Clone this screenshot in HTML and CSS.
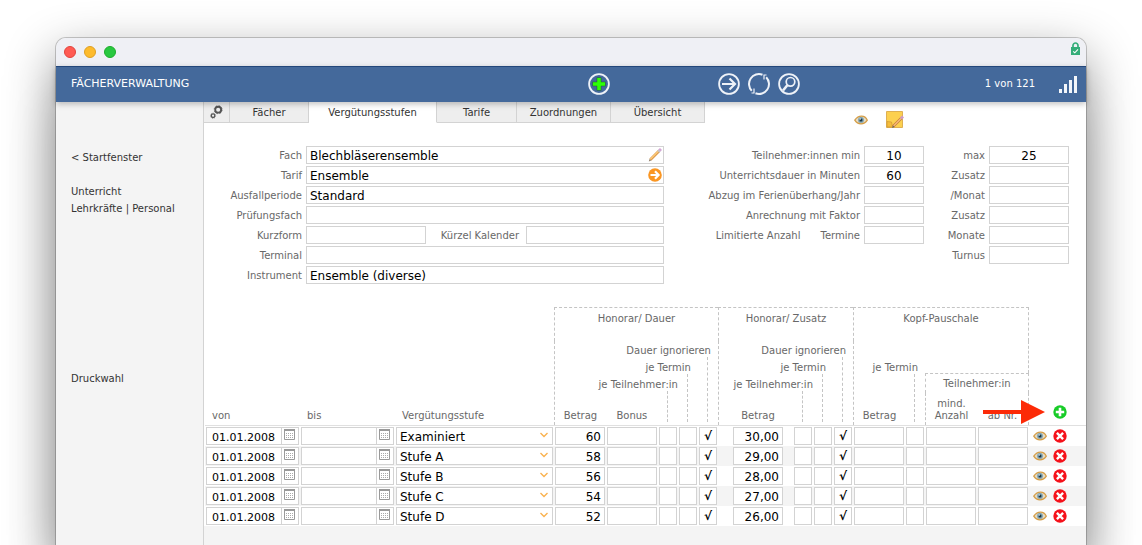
FILE: index.html
```html
<!DOCTYPE html>
<html lang="de">
<head>
  <meta charset="UTF-8" />
  <title>Fächerverwaltung</title>
  <link rel="stylesheet" href="styles.css">
</head>
<body>
  <svg class="sprite" aria-hidden="true">
    <symbol id="i-eye" viewBox="0 0 14 10">
      <path d="M.8 5.200Q3.500 1.200 7.500 1.200T13.300 5.200Q11 8.800 7 8.800T.8 5.200Z" fill="#e6dcc4" stroke="#d49d47" stroke-width="1.300"/>
      <circle cx="7" cy="4.900" r="2.900" fill="#7ba0ae"/>
      <circle cx="7" cy="4.900" r="1.500" fill="#1d3644"/>
      <circle cx="6.200" cy="4" r=".7" fill="#fff"/>
    </symbol>
    <symbol id="i-delete" viewBox="0 0 14 14">
      <circle cx="7" cy="7" r="6.700" fill="#f5121b"/>
      <path d="M3.900 3.900 10.100 10.100M10.100 3.900 3.900 10.100" stroke="#fff" stroke-width="2.400"/>
    </symbol>
    <symbol id="i-calendar" viewBox="0 0 11 11">
      <path d="M.5.5h10v10H.5z" fill="#fff" stroke="#999"/>
      <path d="M0 0h11v2H0z" fill="#999"/>
      <path d="M2 4.500h7M2 6.500h7M2 8.500h7" stroke="#aaa" stroke-dasharray="1 1"/>
    </symbol>
  </svg>

  <div class="window">
    <div class="titlebar">
      <button class="dot red" aria-label="Schließen"></button>
      <button class="dot yellow" aria-label="Minimieren"></button>
      <button class="dot green" aria-label="Maximieren"></button>
      <svg class="lock" width="9" height="13" viewBox="0 0 9 13">
        <path d="M2 6V3.500a2.500 2.500 0 0 1 5 0V6" fill="none" stroke="#34ad79" stroke-width="1.700"/>
        <path d="M0 5h9v8H0z" fill="#34ad79"/>
        <path d="M2.200 9.300 3.800 10.800 7 7.300" fill="none" stroke="#fff" stroke-width="1.100"/>
      </svg>
    </div>

    <header class="header">
      <h1>FÄCHERVERWALTUNG</h1>
      <div class="header-tools">
        <button class="tool tool-new" aria-label="Neu">
          <svg viewBox="0 0 22 22"><circle cx="11" cy="11" r="9.900" fill="none" stroke="#eef2f8" stroke-width="1.800"/><path d="M11 4.500v13M4.500 11h13" stroke="#1c6a1c" stroke-width="4.600"/><path d="M11 5v12M5 11h12" stroke="#2cff08" stroke-width="3.600"/></svg>
        </button>
        <button class="tool" aria-label="Weiter">
          <svg viewBox="0 0 22 22"><circle cx="11" cy="11" r="9.900" fill="none" stroke="#eef2f8" stroke-width="1.800"/><path d="M4 11h13M11.500 5.500 17 11 11.500 16.500" fill="none" stroke="#eef2f8" stroke-width="2.200"/></svg>
        </button>
        <button class="tool" aria-label="Aktualisieren">
          <svg viewBox="0 0 22 22"><path d="M14.500 1.700A9.900 9.900 0 0 0 3.800 17.800M7.500 20.300A9.900 9.900 0 0 0 18.200 4.200" fill="none" stroke="#eef2f8" stroke-width="2"/><path d="M6 15.500v4.500H3.500M16 6.500V2h2.500" fill="none" stroke="#eef2f8" stroke-width="1.200"/></svg>
        </button>
        <button class="tool" aria-label="Suchen">
          <svg viewBox="0 0 22 22"><circle cx="11" cy="11" r="9.900" fill="none" stroke="#eef2f8" stroke-width="1.800"/><circle cx="12.500" cy="8.800" r="4.300" fill="none" stroke="#eef2f8" stroke-width="1.700"/><path d="M9.500 12 5 17.500" stroke="#eef2f8" stroke-width="2.600"/></svg>
        </button>
      </div>
      <span class="count">1 von 121</span>
      <svg class="bars" width="19" height="18" viewBox="0 0 19 18"><path d="M0 14h3v4H0zM5 9h3v9H5zM10 5h3v13h-3zM15 1h3v17h-3z" fill="#f3f6fa"/></svg>
    </header>

    <div class="layout">
      <nav class="sidebar">
        <a href="#">&lt; Startfenster</a>
        <div class="nav-group">
          <a href="#">Unterricht</a>
          <div><a href="#">Lehrkräfte</a> | <a href="#">Personal</a></div>
        </div>
        <a class="nav-print" href="#">Druckwahl</a>
      </nav>

      <main class="main">
        <div class="content">
          <div class="toolbar">
            <div class="tabs">
              <button class="tab" aria-label="Einstellungen">
                <svg width="13" height="14" viewBox="0 0 14 15" fill="none" stroke="#555"><circle cx="8.800" cy="5" r="3.200" stroke-width="2"/><circle cx="8.800" cy="5" r="4.300" stroke-width=".8" stroke-dasharray="1.700 1.680"/><circle cx="3.300" cy="11.500" r="1.900" stroke-width="1.400"/><circle cx="3.300" cy="11.500" r="2.800" stroke-width=".6" stroke-dasharray="1.100 1.100"/></svg>
              </button>
              <button class="tab">Fächer</button>
              <button class="tab active">Vergütungsstufen</button>
              <button class="tab">Tarife</button>
              <button class="tab">Zuordnungen</button>
              <button class="tab">Übersicht</button>
            </div>
            <button class="icon-btn" aria-label="Ansicht"><svg width="14" height="10"><use href="#i-eye"/></svg></button>
            <button class="icon-btn" aria-label="Notiz">
              <svg width="18" height="18" viewBox="0 0 18 18"><path d="M.5.5h16v16H.5z" fill="#fcd04f" stroke="#dfb052"/><path d="M1 10.500 5.500 11 6.500 16H1z" fill="#f6bd3a" stroke="#cf9a34" stroke-width=".7"/><path d="M7 15.500 15.500 7" stroke="#c27a3a" stroke-width="2.600"/><path d="M7.500 15 15.500 7" stroke="#f9bb77" stroke-width="1.500"/><path d="M15 7.500 17 5.500" stroke="#cf9cc4" stroke-width="2.800"/><path d="M6 17 7 14.500 8.500 16z" fill="#666"/></svg>
            </button>
          </div>

          <form class="forms">
            <div class="fields fields-subject">
              <label for="fach">Fach</label>
              <div class="field wide">
                <input id="fach" value="Blechbläserensemble">
                <button type="button" class="field-btn" aria-label="Fach bearbeiten"><svg width="14" height="14" viewBox="0 0 14 14"><path d="M.8 13.400 1.800 10.500 3.600 12.300z" fill="#8d7a64"/><path d="M2.500 11.500 11 3" stroke="#d8954a" stroke-width="2.800"/><path d="M2.300 11.200 10.800 2.700" stroke="#fcca78" stroke-width="1.500"/><path d="M10.200 3.800 11.700 2.300" stroke="#c4c4c4" stroke-width="2.800"/><path d="M11.400 2.600 13 1" stroke="#d3a6d5" stroke-width="2.800"/></svg></button>
              </div>
              <label for="tarif">Tarif</label>
              <div class="field wide">
                <input id="tarif" value="Ensemble">
                <button type="button" class="field-btn" aria-label="Tarif öffnen"><svg width="14" height="14" viewBox="0 0 14 14"><circle cx="7" cy="7" r="6.800" fill="#fa9623"/><path d="M2.500 7h7M7 3.200 10.600 7 7 10.800" fill="none" stroke="#fff" stroke-width="2.200"/></svg></button>
              </div>
              <label for="ausfall">Ausfallperiode</label>
              <input class="wide" id="ausfall" value="Standard">
              <label for="pruefung">Prüfungsfach</label>
              <input class="wide" id="pruefung">
              <label for="kurzform">Kurzform</label>
              <input id="kurzform">
              <label class="inner-label" for="kuerzel">Kürzel Kalender</label>
              <input id="kuerzel">
              <label for="terminal">Terminal</label>
              <input class="wide" id="terminal">
              <label for="instrument">Instrument</label>
              <input class="wide" id="instrument" value="Ensemble (diverse)">
            </div>

            <div class="fields fields-limits">
              <label for="tmin">Teilnehmer:innen min</label><input id="tmin" value="10">
              <label for="tmax">max</label><input id="tmax" value="25">
              <label for="dauer">Unterrichtsdauer in Minuten</label><input id="dauer" value="60">
              <label for="zusatz1">Zusatz</label><input id="zusatz1">
              <label for="abzug">Abzug im Ferienüberhang/Jahr</label><input id="abzug">
              <label for="monat">/Monat</label><input id="monat">
              <label for="faktor">Anrechnung mit Faktor</label><input id="faktor">
              <label for="zusatz2">Zusatz</label><input id="zusatz2">
              <label class="split-label" for="termine"><span>Limitierte Anzahl</span><span>Termine</span></label><input id="termine">
              <label for="monate">Monate</label><input id="monate">
              <label class="turnus" for="turnus">Turnus</label><input id="turnus">
            </div>
          </form>

          <table class="rates">
            <colgroup>
              <col class="c-date"><col class="c-date"><col>
              <col class="c-num"><col class="c-num"><col class="c-check"><col class="c-check"><col class="c-check">
              <col class="c-extra"><col class="c-check"><col class="c-check"><col class="c-check">
              <col class="c-num"><col class="c-check"><col class="c-num"><col class="c-num">
              <col class="c-eye"><col class="c-delete">
            </colgroup>
            <thead>
              <tr class="row-group">
                <th class="left" rowspan="4">von</th>
                <th class="left" rowspan="4">bis</th>
                <th class="left" rowspan="4">Vergütungsstufe</th>
                <th class="group line-l" colspan="5">Honorar/ Dauer</th>
                <th class="group line-l" colspan="4">Honorar/ Zusatz</th>
                <th class="group line-l line-r" colspan="4">Kopf-Pauschale</th>
                <th rowspan="4"></th>
                <th class="add-cell" rowspan="4">
                  <button class="icon-btn" aria-label="Stufe hinzufügen"><svg width="14" height="14" viewBox="0 0 14 14"><circle cx="7" cy="7" r="6.700" fill="#18cc28"/><path d="M7 2.800v8.400M2.800 7h8.400" stroke="#fff" stroke-width="2.600"/></svg></button>
                  <svg class="arrow" width="62" height="26" viewBox="0 0 62 26"><path d="M0 11h38V1l24 12-24 12V15H0z" fill="#fc2a07"/></svg>
                </th>
              </tr>
              <tr class="row-space">
                <th class="line-l" rowspan="3">Betrag</th>
                <th rowspan="3">Bonus</th>
                <th rowspan="3"><div class="drop drop-low"><span>je Teilnehmer:in</span></div></th>
                <th rowspan="3"><div class="drop drop-mid"><span>je Termin</span></div></th>
                <th rowspan="3"><div class="drop drop-high"><span>Dauer ignorieren</span></div></th>
                <th class="line-l extra" rowspan="3">Betrag</th>
                <th rowspan="3"><div class="drop drop-low"><span>je Teilnehmer:in</span></div></th>
                <th rowspan="3"><div class="drop drop-mid"><span>je Termin</span></div></th>
                <th rowspan="3"><div class="drop drop-high"><span>Dauer ignorieren</span></div></th>
                <th class="line-l" rowspan="3">Betrag</th>
                <th rowspan="3"><div class="drop drop-mid"><span>je Termin</span></div></th>
                <td class="line-r" colspan="2"></td>
              </tr>
              <tr class="row-sub">
                <th class="line-l line-t line-r" colspan="2">Teilnehmer:in</th>
              </tr>
              <tr class="row-last">
                <th class="line-l">mind.<br>Anzahl</th>
                <th class="line-r">ab Nr.</th>
              </tr>
            </thead>
            <tbody id="rates"></tbody>
          </table>
        </div>
      </main>
    </div>
  </div>

  <script>
    const stufen = [
      ["Examiniert", "60", "30,00"],
      ["Stufe A", "58", "29,00"],
      ["Stufe B", "56", "28,00"],
      ["Stufe C", "54", "27,00"],
      ["Stufe D", "52", "26,00"]
    ];

    const dateCell = (label, value) => `<td><div class="date"><input aria-label="${label}" value="${value}"><button aria-label="${label}: Kalender"><svg width="11" height="11"><use href="#i-calendar"/></svg></button></div></td>`;
    const numCell = (label, value = "", cls = "") => `<td class="${cls}"><input class="num" aria-label="${label}" value="${value}"></td>`;
    const checkCell = (label, checked = "") => `<td><input type="checkbox" aria-label="${label}" ${checked}></td>`;

    document.getElementById("rates").innerHTML = stufen.map(([name, honorar, zusatz]) => `<tr>
      ${dateCell("von", "01.01.2008")}
      ${dateCell("bis", "")}
      <td><select aria-label="Vergütungsstufe">${stufen.map(s => `<option ${s[0] === name ? "selected" : ""}>${s[0]}</option>`).join("")}</select></td>
      ${numCell("Honorar Betrag", honorar)}
      ${numCell("Bonus")}
      ${checkCell("je Teilnehmer:in")}
      ${checkCell("je Termin")}
      ${checkCell("Dauer ignorieren", "checked")}
      ${numCell("Zusatz Betrag", zusatz, "extra")}
      ${checkCell("je Teilnehmer:in")}
      ${checkCell("je Termin")}
      ${checkCell("Dauer ignorieren", "checked")}
      ${numCell("Kopf-Pauschale Betrag")}
      ${checkCell("je Termin")}
      ${numCell("mind. Anzahl")}
      ${numCell("ab Nr.")}
      <td class="action"><button class="icon-btn" aria-label="Ansehen"><svg width="14" height="10"><use href="#i-eye"/></svg></button></td>
      <td class="action action-delete"><button class="icon-btn" aria-label="Löschen"><svg width="14" height="14"><use href="#i-delete"/></svg></button></td>
    </tr>`).join("");
  </script>
</body>
</html>
```
FILE: styles.css
```css
:root {
  --blue: #44699b;
  --grey: #f4f4f4;
  --line: #d3d3d3;
  --label: #686868;
}

* {
  box-sizing: border-box;
}

body {
  font-family: Verdana, "DejaVu Sans", sans-serif;
  font-size: 10px;
  color: #333;
  background: #fff;
  margin: 0;
  padding: 38px 56px 0;
  min-height: 100vh;
  display: flex;
  overflow-x: hidden;
}

button, input, select {
  font: inherit;
  color: inherit;
  margin: 0;
  padding: 0;
  border: none;
  border-radius: 0;
  background: none;
}

button {
  cursor: pointer;
}

svg {
  display: block;
}

a {
  color: inherit;
  text-decoration: none;
}

.sprite {
  display: none;
}

.window {
  flex: 1;
  min-width: 0;
  display: flex;
  flex-direction: column;
  border-radius: 10px 10px 0 0;
  box-shadow: 0 0 0 1px rgba(0,0,0,0.2), 0 18px 50px rgba(0,0,0,0.45), 0 70px 50px rgba(0,0,0,0.15);
}

.titlebar {
  display: flex;
  align-items: center;
  gap: 8px;
  height: 28px;
  padding: 0 6px 0 8px;
  background: #eff0f5;
  border-radius: 10px 10px 0 0;
}

.dot {
  width: 12px;
  height: 12px;
  border-radius: 50%;
}
.red { background: #ff5b54; border: 1px solid #e2443e; }
.yellow { background: #fdbb2d; border: 1px solid #dfa023; }
.green { background: #28c840; border: 1px solid #1dad2b; }

.lock {
  margin: 0 0 7px auto;
}

.header {
  position: relative;
  z-index: 1;
  display: flex;
  align-items: center;
  height: 36px;
  padding: 0 8px 2px 15px;
  background: var(--blue);
  border-top: 1px solid #23477b;
  color: #fff;
  box-shadow: 0 2px 6px rgba(0,0,0,0.25);
}

.header h1 {
  flex: 0 1 517px;
  margin: 0;
  font-size: 11px;
  font-weight: normal;
}

.header-tools {
  display: flex;
  gap: 8px;
}

.tool {
  width: 22px;
  height: 22px;
}
.tool-new {
  margin-right: 100px;
}

.count {
  margin-left: auto;
}

.bars {
  margin-left: 24px;
}

.layout {
  flex: 1;
  display: flex;
}

.sidebar {
  flex: 0 0 148px;
  padding: 47px 0 0 15px;
  background: var(--grey);
  border-right: 1px solid var(--line);
  line-height: 17px;
}
.sidebar > a {
  display: block;
}
.nav-group {
  margin-top: 17px;
}
.sidebar .nav-print {
  margin-top: 153px;
}

.main {
  flex: 1;
  min-width: 0;
  background: var(--grey);
}

.content {
  background: #fff;
}

.toolbar {
  display: flex;
  align-items: flex-start;
}

.tabs {
  display: grid;
  grid-template-columns: 26px 79px 128px 80px 94px 94px;
  height: 21px;
  margin-right: 149px;
}

.tab {
  display: flex;
  align-items: center;
  justify-content: center;
  background: #eee;
  border: 1px solid var(--line);
  border-width: 0 1px 1px 0;
}
.tab.active {
  background: #fff;
  border-bottom-color: #fff;
}

.icon-btn {
  display: flex;
  align-items: center;
  justify-content: center;
}
.toolbar .icon-btn {
  height: 18px;
  margin: 9px 18px 0 0;
}

.forms {
  display: flex;
  justify-content: space-between;
  align-items: flex-start;
  padding: 17px 17px 23px 0;
}

.fields {
  display: grid;
  grid-auto-rows: 18px;
  gap: 2px 4px;
  align-items: center;
  color: var(--label);
}
.fields label {
  text-align: right;
  white-space: nowrap;
}
.fields-subject {
  grid-template-columns: 98px 120px 92px 138px;
}
.fields-limits {
  grid-template-columns: 156px 60px 57px 80px;
}
.fields-limits input {
  text-align: center;
}
.wide {
  grid-column: span 3;
}
.inner-label {
  padding-right: 3px;
}
.split-label {
  display: flex;
  justify-content: flex-end;
  gap: 20px;
}
.turnus {
  grid-column: 3;
}

.fields input, .date, .rates select, .num, .rates input[type="checkbox"] {
  display: block;
  width: 100%;
  height: 18px;
  background-color: #fff;
  border: 1px solid var(--line);
  color: #000;
}

.fields input, .rates select, .num {
  font-size: 12px;
  padding: 2px 3px 0;
}

.field {
  display: grid;
  align-items: center;
}
.field > * {
  grid-area: 1 / 1;
}
.field-btn {
  justify-self: end;
  margin-right: 2px;
}

.rates {
  width: 100%;
  table-layout: fixed;
  border-collapse: separate;
  border-spacing: 0;
  border-left: 1px solid #fff;
}
.c-date { width: 95px; }
.c-num { width: 52px; }
.c-check { width: 20px; }
.c-extra { width: 75px; }
.c-eye { width: 21px; }
.c-delete { width: 36px; }

.rates th {
  padding: 0 0 3px;
  font-weight: normal;
  line-height: 12px;
  color: var(--label);
  vertical-align: bottom;
}
.rates th.left {
  padding-left: 7px;
  text-align: left;
}
.rates th.group {
  padding-top: 5px;
  vertical-align: top;
  border-top: 1px dashed #c4c4c4;
}
.rates .line-l { border-left: 1px dashed #c4c4c4; }
.rates .line-r { border-right: 1px dashed #c4c4c4; }
.rates .line-t { border-top: 1px dashed #c4c4c4; }

.row-group { height: 34px; }
.row-space { height: 32px; }
.row-sub { height: 20px; }
.row-last { height: 32px; }

/* column captions that run out to the left above their dashed guide */
.drop {
  display: flex;
  flex-direction: column;
  align-items: flex-end;
  white-space: nowrap;
}
.drop span {
  margin-right: 7px;
}
.drop::after {
  content: "";
  align-self: center;
  border-left: 1px dashed #c4c4c4;
}
.drop-low span { margin-right: 0; }
.drop-low::after { height: 31px; }
.drop-mid::after { height: 48px; }
.drop-high::after { height: 65px; }

.rates th.add-cell {
  position: relative;
  padding: 0 0 6px 3px;
}
.arrow {
  position: absolute;
  right: 41px;
  bottom: 0;
}

.rates tbody tr:first-child td {
  border-top: 1px solid #e0e0e0;
}
.rates tbody tr:nth-child(even) {
  background: var(--grey);
}
.rates tbody td {
  padding: 1px;
}
.rates tbody td.extra {
  padding: 1px 10px 1px 15px;
}
.rates th.extra {
  padding: 0 10px 3px 14px;
}

.date {
  display: flex;
}
.date input {
  flex: 1;
  min-width: 0;
  padding: 2px 0 0 5px;
  font-size: 11px;
}
.date button {
  flex: 0 0 17px;
  padding: 0 0 0 2px;
  border-left: 1px solid var(--line);
}
.date svg {
  margin-bottom: 4px;
}

.rates select {
  appearance: none;
  background: #fff url("data:image/svg+xml,%3Csvg xmlns='http://www.w3.org/2000/svg' width='8' height='6'%3E%3Cpath d='M.5 1 4 4.500 7.500 1' fill='none' stroke='%23f9b250' stroke-width='1.400'/%3E%3C/svg%3E") no-repeat right 4px top 4px;
}

.num {
  text-align: right;
}

.rates input[type="checkbox"] {
  appearance: none;
  text-align: center;
  font-size: 12px;
  font-weight: bold;
  line-height: 17px;
}
.rates input[type="checkbox"]:checked::before {
  content: "√";
}

.rates tbody td.action {
  padding: 0 0 0 4px;
}
.rates tbody td.action-delete {
  padding-left: 3px;
}
```
